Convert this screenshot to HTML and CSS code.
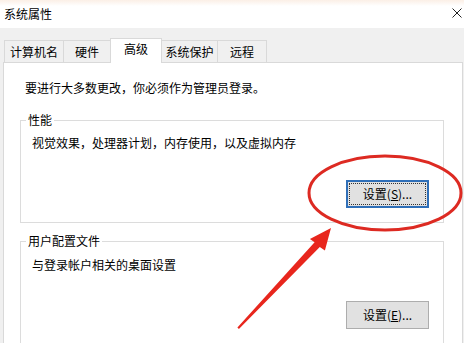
FILE: index.html
```html
<!DOCTYPE html>
<html lang="zh-CN">
<head>
<meta charset="utf-8">
<title>系统属性</title>
<link rel="stylesheet" href="styles.css">
</head>
<body>
<div class="window">
  <div class="titlebar">
    <span class="title">系统属性</span>
    <svg class="close" viewBox="0 0 10 10" width="10" height="10"><path d="M0.5 0.5 L9.5 9.5 M9.5 0.5 L0.5 9.5" stroke="#222" stroke-width="1" fill="none"/></svg>
  </div>
  <div class="tabs">
    <div class="tab t1">计算机名</div>
    <div class="tab t2">硬件</div>
    <div class="tab t3 active">高级</div>
    <div class="tab t4">系统保护</div>
    <div class="tab t5">远程</div>
  </div>
  <div class="panel">
    <p class="note">要进行大多数更改，你必须作为管理员登录。</p>
    <fieldset class="group g1">
      <legend>性能</legend>
      <p class="desc">视觉效果，处理器计划，内存使用，以及虚拟内存</p>
      <div class="actions"><button class="btn focus" type="button">设置(<u>S</u>)...</button></div>
    </fieldset>
    <fieldset class="group g2">
      <legend>用户配置文件</legend>
      <p class="desc">与登录帐户相关的桌面设置</p>
      <div class="actions"><button class="btn" type="button">设置(<u>E</u>)...</button></div>
    </fieldset>
  </div>
  <svg class="annot" viewBox="0 0 464 343" width="464" height="343">
    <ellipse cx="385" cy="193" rx="76" ry="37" fill="none" stroke="#dd2a22" stroke-width="3"/>
    <polygon points="331,228 309.9,239.1 314.6,242.2 237.4,327.6 238.9,328.9 319.8,246.9 324.9,250.6" fill="#e8261d"/>
  </svg>
</div>
</body>
</html>
```
FILE: styles.css
```css
* { box-sizing: border-box; }
html, body { margin: 0; padding: 0; }
body {
  width: 464px;
  height: 343px;
  overflow: hidden;
  background: #f0f0f0;
  font-family: "Noto Sans CJK SC", "Noto Sans", sans-serif;
  font-size: 12px;
  line-height: 16px;
  color: #000;
}
.window {
  position: relative;
  width: 464px;
  height: 343px;
  overflow: hidden;
}
.titlebar {
  height: 28px;
  background: linear-gradient(#fbefe6 0, #ffffff 6px);
  display: flex;
  align-items: center;
  justify-content: space-between;
  padding: 0 2px 0 4px;
}
.title { font-size: 12px; }
.close { margin-bottom: 2px; }
.tabs {
  display: flex;
  align-items: flex-end;
  height: 24px;
  margin-top: 10px;
  padding-left: 4px;
  position: relative;
  z-index: 2;
}
.tab {
  height: 22px;
  border: 1px solid #d9d9d9;
  border-bottom: none;
  background: #f0f0f0;
  display: flex;
  align-items: center;
  justify-content: center;
  margin-right: -1px;
  padding-top: 1px;
}
.t1 { width: 60px; }
.t2 { width: 48px; }
.t3 { width: 52px; }
.t4 { width: 57px; }
.t5 { width: 50px; }
.tab.active {
  height: 25px;
  background: #fff;
  margin-bottom: -1px;
  padding-top: 0;
  padding-bottom: 4px;
  position: relative;
  z-index: 3;
}
.panel {
  position: relative;
  z-index: 1;
  margin-left: 3px;
  width: 460px;
  height: 400px;
  background: #fff;
  border: 1px solid #d9d9d9;
  padding-top: 17px;
}
.note { margin: 0 0 0 21px; }
.group {
  margin: 16px 0 0 16px;
  padding: 0 14px 14px 11px;
  width: 424px;
  min-width: 0;
  border: 1px solid #dcdcdc;
}
.g2 { margin-top: 10px; }
.group legend {
  padding: 0 2px;
  margin-left: -6px;
  line-height: 16px;
}
.desc { margin: 7px 0 0 0; }
.g2 .desc { margin-top: 8px; }
.actions {
  display: flex;
  justify-content: flex-end;
  margin-top: 29px;
}
.g2 .actions { margin-top: 28px; }
.btn {
  position: relative;
  width: 83px;
  height: 28px;
  padding: 0;
  border: 1px solid #adadad;
  background: #e1e1e1;
  font-family: inherit;
  font-size: 12px;
  line-height: 16px;
  color: #000;
  display: flex;
  align-items: center;
  justify-content: center;
}
.btn.focus { border: 2px solid #2f6fb8; }
.btn.focus::after {
  content: "";
  position: absolute;
  inset: 1px;
  border: 1px dotted #333;
}
.annot {
  position: absolute;
  left: 0;
  top: 0;
  pointer-events: none;
  z-index: 10;
}
```
